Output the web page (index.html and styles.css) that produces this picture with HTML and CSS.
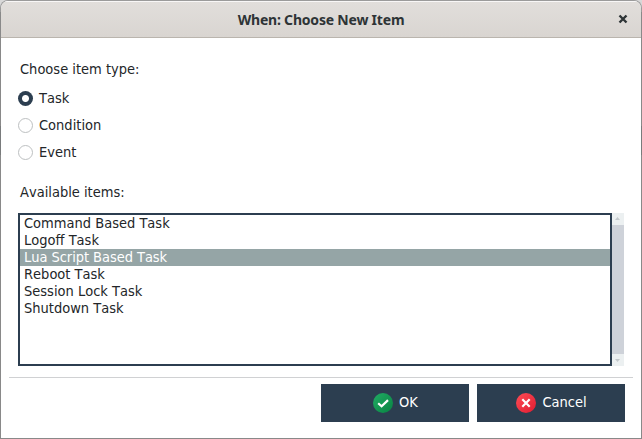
FILE: index.html
```html
<!DOCTYPE html>
<html lang="en">
<head>
<meta charset="utf-8">
<title>When: Choose New Item</title>
<link rel="stylesheet" href="styles.css">
</head>
<body>
<div class="window">
  <header class="titlebar">
    <span></span>
    <h1 class="title">When: Choose New Item</h1>
    <svg class="close" width="10" height="10" viewBox="0 0 10 10"><path d="M1.5 1.5L8.5 8.5M8.5 1.5L1.5 8.5"/></svg>
  </header>
  <main class="content">
    <div class="label">Choose item type:</div>
    <div class="radios">
      <div class="radio"><i class="dot checked"></i><span>Task</span></div>
      <div class="radio"><i class="dot"></i><span>Condition</span></div>
      <div class="radio"><i class="dot"></i><span>Event</span></div>
    </div>
    <div class="label available">Available items:</div>
    <div class="list-area">
      <ul class="list">
        <li>Command Based Task</li>
        <li>Logoff Task</li>
        <li class="selected">Lua Script Based Task</li>
        <li>Reboot Task</li>
        <li>Session Lock Task</li>
        <li>Shutdown Task</li>
      </ul>
      <div class="scrollbar">
        <svg width="12" height="12" viewBox="0 0 12 12"><path d="M3 7L5.5 4L8 7Z"/></svg>
        <div class="thumb"></div>
        <svg width="12" height="12" viewBox="0 0 12 12"><path d="M3 5L5.5 8L8 5Z"/></svg>
      </div>
    </div>
  </main>
  <footer class="actions">
    <div class="button">
      <svg width="20" height="20" viewBox="0 0 20 20">
        <defs><linearGradient id="green" x1="0" y1="0" x2="1" y2="1"><stop offset="0" stop-color="#21ad64"/><stop offset="1" stop-color="#088242"/></linearGradient></defs>
        <circle cx="10" cy="10" r="10" fill="url(#green)"/>
        <path class="mark" d="M5.2 10.2L8.6 13.2L15 7.1"/>
      </svg>
      <span>OK</span>
    </div>
    <div class="button">
      <svg width="20" height="20" viewBox="0 0 20 20">
        <defs><linearGradient id="red" x1="0" y1="0" x2="1" y2="1"><stop offset="0" stop-color="#ff4c55"/><stop offset="1" stop-color="#e01c31"/></linearGradient></defs>
        <circle cx="10" cy="10" r="10" fill="url(#red)"/>
        <path class="mark" d="M6.3 6.3L13.7 13.7M13.7 6.3L6.3 13.7"/>
      </svg>
      <span>Cancel</span>
    </div>
  </footer>
</div>
</body>
</html>
```
FILE: styles.css
```css
* { box-sizing: border-box; }
body {
  margin: 0;
  height: 439px;
  overflow: hidden;
  background: linear-gradient(#d8d8d8 0 12px, #909090 12px 126px, #4f5a5c 126px 155px, #909090 155px);
  font: 14.5px/17px "DejaVu Sans Condensed", "DejaVu Sans", sans-serif;
  font-stretch: condensed;
  font-kerning: none;
  color: #232629;
}
.window {
  height: 439px;
  border: 1px solid rgba(135, 135, 135, 0.75);
  border-radius: 8px 8px 0 0;
  background: #fff;
  background-clip: padding-box;
  overflow: hidden;
}
.titlebar {
  display: grid;
  grid-template-columns: 36px 1fr 36px;
  align-items: center;
  height: 37px;
  border-top: 1px solid #f8f7f7;
  border-bottom: 1px solid #bab5ae;
  background: linear-gradient(#e1dedb, #d9d5d1);
}
.title {
  margin: 0;
  text-align: center;
  font: bold 14px/20px "Noto Sans", sans-serif;
  letter-spacing: -0.2px;
  color: #2e3436;
}
.close { justify-self: center; margin-top: -1px; fill: none; stroke: #2e3436; stroke-width: 2.4; }
.content { height: 339px; padding: 23px 17px 0; }
.label { height: 17px; padding-left: 2px; }
.radios { display: grid; gap: 10px; padding-top: 12px; }
.radio { display: flex; align-items: center; gap: 6px; height: 17px; }
.dot { width: 15px; height: 15px; border: 1px solid #bdc0c1; border-radius: 50%; }
.dot.checked { border: 0; background: radial-gradient(circle, #fff 3px, #2c3e50 4px); }
.available { margin-top: 23px; }
.list-area { display: flex; height: 153px; margin-top: 12px; }
.list {
  width: 594px;
  margin: 0;
  padding: 0;
  border: 2px solid #2c3e50;
  list-style: none;
}
.list li { height: 17px; padding-left: 4px; }
.list .selected { background: #95a5a6; color: #fff; letter-spacing: -0.05px; }
.scrollbar { display: flex; flex-direction: column; width: 12px; background: #ecf0f1; }
.scrollbar path { fill: #c4c9cc; }
.thumb { flex: 1; background: #ced2d9; }
.actions {
  display: flex;
  justify-content: flex-end;
  gap: 8px;
  margin: 0 8px;
  padding: 6px 8px 0;
  border-top: 1px solid #d0d1d3;
}
.button {
  display: flex;
  align-items: center;
  justify-content: center;
  gap: 6px;
  width: 148px;
  height: 38px;
  padding-left: 1px;
  background: #2c3e50;
  color: #fff;
}
.button span { margin-top: -2px; }
.mark { fill: none; stroke: #fff; stroke-width: 2.2; }
```
